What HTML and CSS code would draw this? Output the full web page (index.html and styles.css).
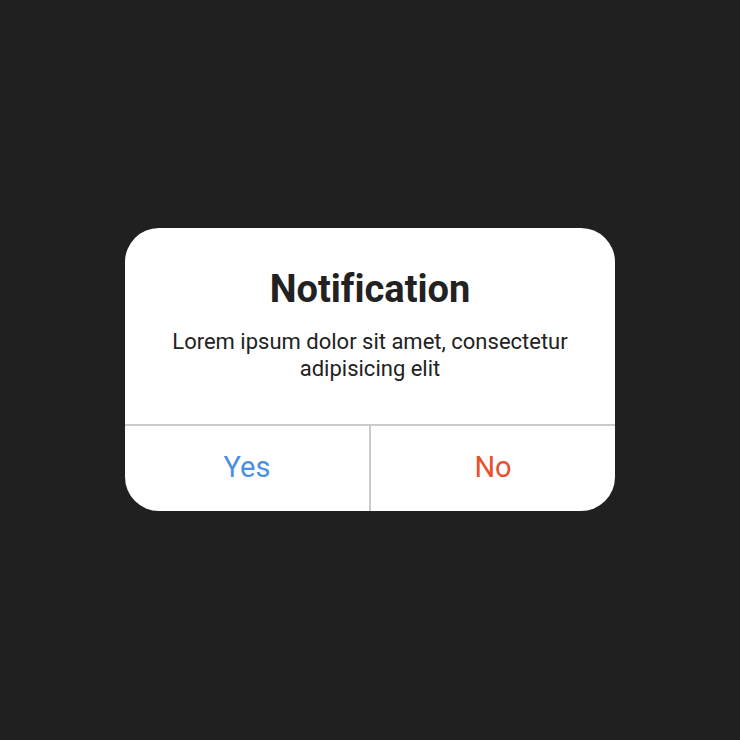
FILE: index.html
```html
<!DOCTYPE html>
<html>
<head>
<meta charset="utf-8">
<link rel="stylesheet" href="styles.css">
</head>
<body>
<div class="stage">
  <div class="dialog">
    <div class="content">
      <h1 class="title">Notification</h1>
      <p class="message">Lorem ipsum dolor sit amet, consectetur<br>adipisicing elit</p>
    </div>
    <div class="actions">
      <div class="btn yes">Yes</div>
      <div class="btn no">No</div>
    </div>
  </div>
</div>
</body>
</html>
```
FILE: styles.css
```css
html, body {
  margin: 0;
  padding: 0;
  background: #202020;
  font-family: Roboto, "Liberation Sans", sans-serif;
  font-variant-ligatures: none;
}
.stage {
  width: 740px;
  height: 740px;
  display: flex;
  justify-content: center;
  padding-top: 228px;
  box-sizing: border-box;
}
.dialog {
  width: 490px;
  height: 283px;
  background: #fff;
  border-radius: 34px;
  display: flex;
  flex-direction: column;
  overflow: hidden;
}
.content {
  height: 198px;
  box-sizing: border-box;
  padding-top: 39px;
  text-align: center;
  border-bottom: 2px solid #cbcbcb;
}
.title {
  margin: 0;
  font-size: 38px;
  font-weight: 700;
  color: #222;
  line-height: 44px;
}
.message {
  margin: 17px 0 0;
  font-size: 22px;
  line-height: 27px;
  color: #222;
}
.actions {
  flex: 1;
  display: flex;
}
.btn {
  flex: 1;
  display: flex;
  align-items: center;
  justify-content: center;
  font-size: 29px;
  padding-bottom: 4px;
}
.yes {
  color: #4a90e2;
  border-right: 2px solid #cbcbcb;
}
.no {
  color: #e8502e;
}
```
